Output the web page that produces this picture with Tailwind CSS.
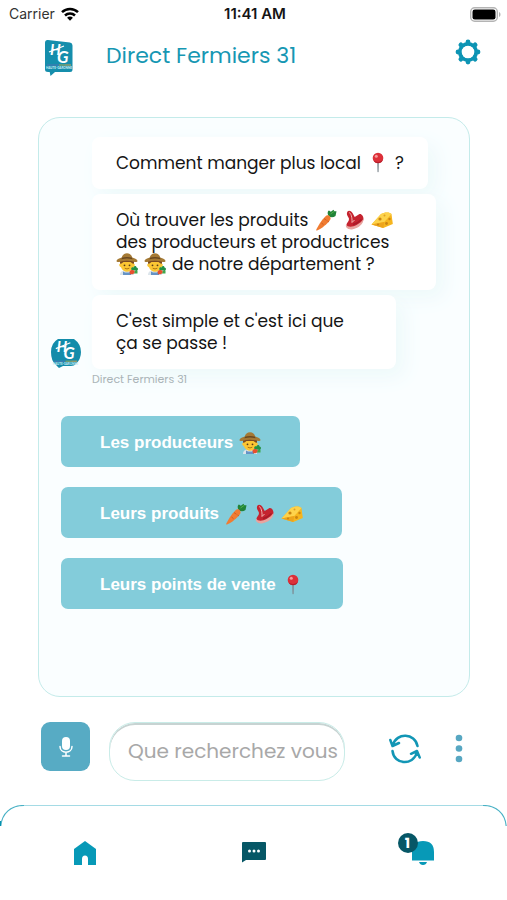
<!DOCTYPE html>
<html lang="fr">
<head>
  <meta charset="UTF-8" />
  <meta name="viewport" content="width=device-width, initial-scale=1.0" />
  <title>Direct Fermiers 31</title>
  <script src="https://cdn.jsdelivr.net/npm/@tailwindcss/browser@4"></script>
</head>
<body class="flex flex-col bg-white min-h-screen font-['Poppins','Inter',sans-serif] text-[#151515]">

  <!-- Icônes partagées -->
  <svg class="hidden" aria-hidden="true">
    <symbol id="pin" viewBox="0 0 22 22">
      <path d="M10.200 9h1.700l-.3 10.500-.6 1-.5-1z" fill="#7d868d" />
      <circle cx="11" cy="6" r="5.300" fill="#dc3039" />
      <path d="M6.500 8.500a5.300 5.300 0 0 0 9.500-.8 7 7 0 0 1-9.500.8z" fill="#b11d2a" />
      <circle cx="9.300" cy="4.200" r="1.500" fill="#f79a9b" />
    </symbol>
    <symbol id="carrot" viewBox="0 0 22 22">
      <path d="M14 7.500C12 5 12.500 2 14 1.500l1.800 1.200L18.500.8l.8 1.400 2.200.1-.5 2.500-.5 2.200c-2 1.500-4.500 1.500-6.500.5z" fill="#218338" />
      <path d="M15.500 5l3.500-2.500" stroke="#5cbb4a" stroke-width=".8" />
      <path d="M11.500 6.500c2-1.200 5 1.300 3.800 4C13.500 14 6 20.300 2 21.500c-.8.200-1-.2-.7-1C3.500 16 8.500 8.500 11.500 6.500z" fill="#f07c32" />
      <path d="M9 9.500l2.500 1.800M6.500 14l2 1.600M12.500 12l1.500 1" stroke="#c9561c" stroke-width=".8" />
    </symbol>
    <symbol id="meat" viewBox="0 0 22 22">
      <path d="M4.500 2.500C6 1.200 8 2 9.500 4l2.200 4L16.500 5c2-.5 4 2 4 5-.5 4-5 8-10 9.500-4 1-7.500-.5-7-4 .3-2 2.500-3 2.500-5.500C6 8 2.500 6 4.500 2.500z" fill="#c5232f" />
      <path d="M3 15.500c2 3 6.500 2.500 10.500.5 3.500-1.800 5.500-3.800 6.900-6 .4 4.500-4.500 9-10.500 10.200C5.500 21 2 19 3 15.500z" fill="#e8a5a0" />
      <path d="M6 3.500c2 .5 3.300 5 3 10l2.500-2.500" stroke="#f2b5b0" stroke-width="1" fill="none" />
      <path d="M10 15.500c3.500-.6 6-2.500 8.500-5" stroke="#a81a28" stroke-width="1.500" fill="none" />
    </symbol>
    <symbol id="cheese" viewBox="0 0 22 22">
      <path d="M.5 15.500L10 5C13 3 19 2.800 20.500 5l1.300 10-9.500 4z" fill="#f6b51e" />
      <path d="M.5 15.500L10 5c3-2 9-2.200 10.500 0l-7.200 8z" fill="#fdd34c" />
      <path d="M.5 15.500L13.300 13l-1 6z" fill="#eda41c" />
      <circle cx="9" cy="10" r="1.600" fill="#c98412" />
      <circle cx="15.500" cy="14.500" r="1.400" fill="#c98412" />
      <circle cx="18.500" cy="10" r="1.200" fill="#c98412" />
      <circle cx="7" cy="15.500" r="1" fill="#c98412" />
      <circle cx="13.500" cy="6.500" r="1" fill="#dfa025" />
    </symbol>
    <symbol id="farmer" viewBox="0 0 22 22">
      <path d="M4 22c0-3.500 2.500-5 7-5s7 1.500 7 5z" fill="#dce5eb" />
      <path d="M7 18.500v3.500h8v-3.500l-2 1H9z" fill="#6593c5" />
      <path d="M4.500 7.500h13v3l1.200.8c.2 1.700-.5 2.700-1.700 2.900-1 2.800-3.400 4.500-6 4.500s-5-1.700-6-4.500c-1.200-.2-1.900-1.200-1.700-2.900l1.200-.8z" fill="#fbc633" />
      <path d="M4 8v2.800l1.500-.3L7.500 9h7l2 1.500 1.500.3V8l-1-2H5z" fill="#7a4a22" />
      <circle cx="8.500" cy="12.300" r=".9" fill="#573b1b" />
      <circle cx="13.500" cy="12.300" r=".9" fill="#573b1b" />
      <path d="M8.700 15.200q2.300 1.500 4.600 0" stroke="#a56b10" stroke-width=".9" fill="none" />
      <path d="M5.800 4.500C6.300 2 8.300.2 11 .2s4.700 1.800 5.200 4.300c3 .8 5.300 2 5.300 3.500 0 1-1.500 1.300-2.700.9C14 7.500 8 7.500 3.200 8.900 2 9.300.5 9 .5 8 .5 6.500 2.800 5.300 5.800 4.500z" fill="#a57a35" />
      <path d="M5.800 4.700q5.200-1.300 10.400 0l.2 1.500q-5.400-1.200-10.800 0z" fill="#694820" />
      <path d="M15.500 17c-1-2 .5-3.500 2-2.500.5-2 3-2 3 0 1.800.3 2 2 .5 3.500z" fill="#249143" />
      <path d="M13.500 18.500c1.500-2 4.500-2 5.500.2-.5 2.300-3 3-5 2.500z" fill="#e6502e" />
      <path d="M19 18h2.500v2.500H18z" fill="#3fa64b" />
    </symbol>
    <symbol id="hg" viewBox="0 0 30 30">
      <g font-family="Lato, sans-serif" font-style="italic" font-weight="700" fill="#fff">
        <text x="6" y="14" font-size="15">H</text>
        <text x="13" y="22" font-size="17">G</text>
      </g>
      <path d="M5 11l15-6" stroke="#fff" stroke-width="1.200" />
      <path d="M3 24h12" stroke="#4d72b5" stroke-width="1" />
      <path d="M15 24h6" stroke="#a2a850" stroke-width="1" />
      <path d="M21 24h6" stroke="#d2a24b" stroke-width="1" />
      <text x="15" y="28" font-size="3" font-family="Lato, sans-serif" font-weight="900" text-anchor="middle" fill="#c9e9f1">HAUTE-GARONNE</text>
    </symbol>
  </svg>

  <!-- Barre d'état -->
  <div class="grid grid-cols-3 items-center pr-1.5 pl-[9px] h-7 font-['Inter',sans-serif] leading-5">
    <div class="flex items-center gap-1.5 text-[#333] text-sm">
      Carrier
      <svg class="w-[18px] h-[14px]" viewBox="0 0 18 14" fill="none" stroke="#000" stroke-width="2.500">
        <path d="M1 5.200a11.500 11.500 0 0 1 16 0M4 8.500a7.200 7.200 0 0 1 10 0" />
        <path d="M9 13.800l-2.900-3a4 4 0 0 1 5.800 0z" fill="#000" stroke="none" />
      </svg>
    </div>
    <div class="font-semibold text-[15px] text-center">11:41 AM</div>
    <svg class="justify-self-end w-[31px] h-[15px]" viewBox="0 0 31 15">
      <rect x=".7" y=".7" width="26.600" height="13.600" rx="4" fill="#fff" stroke="#b4b4b4" stroke-width="1.400" />
      <rect x="2.500" y="2.500" width="23" height="10" rx="2.300" />
      <path d="M29 5c2 .8 2 4.200 0 5z" fill="#b4b4b4" />
    </svg>
  </div>

  <header class="flex items-center pr-[26px] pl-11 h-14">
    <svg class="mt-1 w-[30px] h-[38px]" viewBox="0 0 30 38">
      <path d="M4 1L26 3.500q2.500.3 2.500 3v24q0 2.500-2.500 2.500H11L6.500 37 5.700 33H4Q1 33 1 30.500V4Q1 .7 4 1z" fill="#158eac" />
      <use href="#hg" x="0" y="2" width="30" height="30" />
    </svg>
    <h1 class="flex-1 ml-8 font-normal text-[#1697b3] text-[22px] leading-8">Direct Fermiers 31</h1>
    <button type="button" aria-label="Paramètres" class="mb-2">
      <svg class="w-[26px] h-[26px]" viewBox="0 0 26 26" fill="none" stroke="#0d94b4">
        <circle cx="13" cy="13" r="8" stroke-width="4" />
        <path d="M13 3v1M13 22v1M3 13h1M22 13h1M5.900 5.900l.7.700M19.400 19.400l.7.700M5.900 20.100l.7-.7M19.400 6.600l.7-.7" stroke-width="4.800" stroke-linecap="round" />
        <circle cx="13" cy="13" r="6.300" fill="#fff" stroke="none" />
      </svg>
    </button>
  </header>

  <!-- Conversation -->
  <main class="flex flex-col flex-1 mr-[37px] ml-[38px] mt-[33px] px-[22px] pt-[19px] border border-[#c4ebea] rounded-[22px] bg-[#fafeff]">
    <div class="flex items-end">
      <svg class="-ml-[11px] mr-2.5 w-8 h-8" viewBox="0 0 32 32">
        <path d="M8 2h16q7 5 7 13 0 7-5 12-2 2-5 2h-8l-4 2-3-3Q1 24 1 15T8 2z" fill="#138caa" />
        <use href="#hg" x="1" y="1" width="29" height="29" />
      </svg>
      <div class="flex flex-col items-start gap-[5px] text-[17px] leading-[22px]">
        <p class="flex items-center gap-1.5 bg-white shadow-[8px_8px_20px_#edf9fa] px-6 py-[15px] rounded-lg">
          Comment manger plus local <svg class="w-[22px] h-[22px]"><use href="#pin" /></svg> ?
        </p>
        <div class="bg-white shadow-[8px_8px_20px_#edf9fa] py-[15px] pr-[43px] pl-6 rounded-lg">
          <p class="flex items-center gap-1.5">
            Où trouver les produits
            <svg class="w-[22px] h-[22px]"><use href="#carrot" /></svg>
            <svg class="w-[22px] h-[22px]"><use href="#meat" /></svg>
            <svg class="w-[22px] h-[22px]"><use href="#cheese" /></svg>
          </p>
          <p>des producteurs et productrices</p>
          <p class="flex items-center gap-1.5">
            <svg class="w-[22px] h-[22px]"><use href="#farmer" /></svg>
            <svg class="w-[22px] h-[22px]"><use href="#farmer" /></svg>
            de notre département ?
          </p>
        </div>
        <p class="bg-white shadow-[8px_8px_20px_#edf9fa] py-[15px] pr-[52px] pl-6 rounded-lg">C'est simple et c'est ici que<br />ça se passe !</p>
      </div>
    </div>
    <p class="mt-0.5 ml-[31px] text-[#aab4b7] text-[11px] leading-4">Direct Fermiers 31</p>

    <div class="flex flex-col items-start gap-5 mt-[29px] pb-8 font-['Liberation_Sans',sans-serif] font-bold text-[17px] text-white leading-6">
      <button type="button" class="flex items-center gap-1.5 bg-[#83ccda] px-[39px] pt-[3px] rounded-[7px] h-[51px]">
        Les producteurs <svg class="w-[22px] h-[22px]"><use href="#farmer" /></svg>
      </button>
      <button type="button" class="flex items-center gap-1.5 bg-[#83ccda] px-[39px] pt-[3px] rounded-[7px] h-[51px]">
        Leurs produits
        <svg class="w-[22px] h-[22px]"><use href="#carrot" /></svg>
        <svg class="w-[22px] h-[22px]"><use href="#meat" /></svg>
        <svg class="w-[22px] h-[22px]"><use href="#cheese" /></svg>
      </button>
      <button type="button" class="flex items-center gap-1.5 bg-[#83ccda] px-[39px] pt-[3px] rounded-[7px] h-[51px]">
        Leurs points de vente <svg class="w-[22px] h-[22px]"><use href="#pin" /></svg>
      </button>
    </div>
  </main>

  <!-- Saisie -->
  <form class="flex items-start mt-[25px] pr-11 pl-[41px]">
    <button type="button" aria-label="Dicter" class="flex justify-center items-center bg-[#57abc4] rounded-[9px] w-[49px] h-[49px] shrink-0">
      <svg class="w-[14px] h-[20px]" viewBox="0 0 14 20" fill="none" stroke="#fff" stroke-width="1.500" stroke-linecap="round">
        <rect x="3" y="0" width="8" height="13" rx="4" fill="#fff" stroke="none" />
        <path d="M1 9.500c0 7.500 12 7.500 12 0M7 15.500v3M3.500 19h7" />
      </svg>
    </button>
    <input type="text" aria-label="Recherche" placeholder="Que recherchez vous" class="flex-1 bg-white shadow-[inset_0_2px_0_#c7d3d2] ml-[19px] pr-1 pb-0.5 pl-[18px] border border-[#c9ece8] rounded-[26px] min-w-0 h-[59px] text-xl placeholder:text-[#a8a8a8]" />
    <button type="button" aria-label="Actualiser" class="mt-3 ml-11 shrink-0">
      <svg class="w-8 h-[30px]" viewBox="0 0 32 30" fill="none" stroke="#1296b5" stroke-width="2.500" stroke-linecap="round" stroke-linejoin="round">
        <path d="M28.500 12C26-1 7.500-2 4 11M1.300 6l2.200 6 6.500-3" />
        <path d="M3.500 17C5 31 24 32 28 18.500M22 19.800l6-2.800 2.700 6.500" />
      </svg>
    </button>
    <button type="button" aria-label="Menu" class="mt-3 ml-[34px] shrink-0">
      <svg class="w-2 h-[30px]" viewBox="0 0 8 30" fill="#57a7c2">
        <circle cx="4" cy="4" r="3.300" /><circle cx="4" cy="14.500" r="3.300" /><circle cx="4" cy="25" r="3.300" />
      </svg>
    </button>
  </form>

  <footer class="mt-6 h-[95px]">
    <div class="flex" aria-hidden="true">
      <svg class="w-6 h-[22px]" viewBox="0 0 24 22" fill="none" stroke="#49b1c5"><path d="M24 .5C11 .5 2 8 .8 21" stroke-width="1.200" /><path d="M0 16v5" stroke="#0791ae" stroke-width="2" /></svg>
      <div class="flex-1 border-[#a5dbe5] border-t"></div>
      <svg class="w-6 h-[22px]" viewBox="0 0 24 22" fill="none" stroke="#49b1c5"><path d="M0 .5C13 .5 22 8 23.200 21" stroke-width="1.200" /></svg>
    </div>
    <nav class="grid grid-cols-3 mt-[13px] justify-items-center">
      <a href="#accueil" aria-label="Accueil">
        <svg class="w-6 h-[26px]" viewBox="0 0 24 26"><path d="M12 1L23 9v16h-8v-6q0-3.500-3-3.500T9 19v6H1V9z" fill="#0799b7" /></svg>
      </a>
      <a href="#messages" aria-label="Messages">
        <svg class="w-[26px] h-[26px]" viewBox="0 0 26 26">
          <path d="M2 2h22q1 0 1 1v16q0 1-1 1H5l-4 2.500V3q0-1 1-1z" fill="#065766" />
          <g fill="#fff"><circle cx="8.500" cy="11" r="1.500" /><circle cx="13" cy="11" r="1.500" /><circle cx="17.500" cy="11" r="1.500" /></g>
        </svg>
      </a>
      <a href="#alertes" aria-label="Alertes, 1 nouvelle" class="relative">
        <svg class="w-6 h-[26px]" viewBox="0 0 24 26" fill="#0799b7"><path d="M1 20.500V12Q1 1 12 1t11 11v8.500zM8 22h8q-1 3-4 3t-4-3z" /></svg>
        <span class="-top-[7px] -left-[13px] absolute flex justify-center items-center bg-[#065766] rounded-full w-5 h-5 font-bold text-white text-sm">1</span>
      </a>
    </nav>
  </footer>
</body>
</html>
